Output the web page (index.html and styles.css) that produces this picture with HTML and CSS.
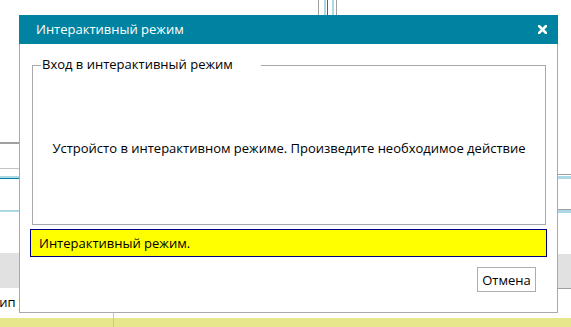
FILE: index.html
```
<!DOCTYPE html>
<html lang="ru">
<head>
<meta charset="utf-8">
<title>Интерактивный режим</title>
<link rel="stylesheet" href="styles.css">
</head>
<body>
<div class="page">
  <div class="col-left">
    <div class="l-line1"></div>
    <div class="l-line2"></div>
    <div class="l-blue-teal"></div>
    <div class="l-blue"></div>
    <div class="l-gray"></div>
    <div class="l-text">Тип устройства</div>
  </div>
  <div class="col-mid">
    <div class="splitter">
      <span class="sp-gray"></span>
      <span class="sp-blue sp-a"></span>
      <span class="sp-teal"></span>
      <span class="sp-blue sp-b"></span>
      <span class="sp-gray sp-c"></span>
    </div>
    <div class="mid-fill"></div>
    <div class="mid-tick"></div>
  </div>
  <div class="col-right">
    <div class="r-line"></div>
    <div class="r-blue"></div>
    <div class="r-line r-line2"></div>
    <div class="r-blue r-blue2"></div>
    <div class="r-gray"></div>
  </div>
  <div class="band"><div class="band-tick"></div></div>
</div>

<div class="dialog">
  <div class="titlebar">
    <span class="title">Интерактивный режим</span>
    <svg class="close" width="9" height="9" viewBox="0 0 9 9" aria-label="Закрыть">
      <path d="M1 1 L8 8 M8 1 L1 8" stroke="#ffffff" stroke-width="2.6" stroke-linecap="square" fill="none"/>
    </svg>
  </div>
  <div class="dbody">
    <div class="group">
      <span class="legend">Вход в интерактивный режим</span>
      <div class="message">Устройсто в интерактивном режиме. Произведите необходимое действие</div>
    </div>
    <div class="status">Интерактивный режим.</div>
    <button class="btn" type="button">Отмена</button>
  </div>
</div>
</body>
</html>
```

FILE: styles.css
```
html, body {
  margin: 0;
  padding: 0;
  background: #ffffff;
}
body {
  width: 571px;
  height: 327px;
  overflow: hidden;
  position: relative;
  font-family: "Open Sans", "Noto Sans", sans-serif;
  font-size: 13px;
  color: #000000;
}
.page {
  display: grid;
  grid-template-columns: 19px 539px 13px;
  grid-template-rows: 318px 9px;
  width: 571px;
  height: 327px;
}
/* left strip */
.col-left {
  display: flex;
  flex-direction: column;
}
.l-line1 { margin-top: 142px; height: 2px; background: #a0a0a0; }
.l-line2 { margin-top: 24px; height: 1px; background: #c4c4c4; }
.l-blue-teal { margin-top: 7px; height: 2px; background: #add8e6; border-bottom: 1px solid #0083a0; }
.l-blue { margin-top: 31px; height: 2px; background: #add8e6; }
.l-gray { margin-top: 41px; height: 35px; background: #e1e1e1; }
.l-text {
  margin-top: 6px;
  white-space: nowrap;
  text-indent: -8px;
  line-height: 17px;
}
/* middle */
.col-mid {
  display: flex;
  flex-direction: column;
}
.splitter {
  height: 15px;
  display: flex;
  padding-left: 299px;
}
.splitter span { display: block; height: 15px; }
.sp-gray { width: 1px; background: #a0a0a0; }
.sp-blue { width: 2px; background: #add8e6; }
.sp-a { margin-left: 5px; }
.sp-teal { width: 1px; background: #0083a0; margin-left: 1px; }
.sp-b { margin-left: 4px; }
.sp-c { margin-left: 2px; }
.mid-fill { flex: 1; }
.mid-tick { height: 5px; margin-left: 94px; border-left: 1px solid #c8c8c8; }
/* right strip */
.col-right {
  display: flex;
  flex-direction: column;
}
.r-line { margin-top: 174px; height: 1px; background: #a0a0a0; }
.r-blue { margin-top: 1px; height: 3px; background: #add8e6; }
.r-line2 { margin-top: 30px; }
.r-blue2 { margin-top: 0; }
.r-gray { margin-top: 41px; height: 34px; background: #e1e1e1; border-bottom: 1px solid #a0a0a0; }
/* bottom band */
.band {
  grid-column: 1 / 4;
  background: #e8e68c;
}
.band-tick { height: 9px; margin-left: 113px; border-left: 1px solid #c8c8a0; }

/* dialog */
.dialog {
  position: absolute;
  left: 19px;
  top: 15px;
  width: 539px;
  height: 298px;
  box-sizing: border-box;
  background: #ffffff;
  border: 1px solid #a9a9a9;
  border-top: 0;
  display: flex;
  flex-direction: column;
}
.titlebar {
  height: 29px;
  margin: 0 -1px;
  background: #0083a0;
  display: flex;
  align-items: center;
  justify-content: space-between;
  padding: 0 11px 0 17px;
}
.title {
  color: #ffffff;
  font-size: 13px;
  line-height: 17px;
}
.close { display: block; }
.dbody {
  padding: 0 10px;
  display: flex;
  flex-direction: column;
}
.group {
  position: relative;
  margin: 21px 1px 0 2px;
  height: 160px;
  box-sizing: border-box;
  border: 1px solid #a9a9a9;
  display: flex;
  align-items: center;
  justify-content: center;
  padding-top: 6px;
}
.legend {
  position: absolute;
  left: 8px;
  top: -10px;
  padding: 0 28px 0 1px;
  background: #ffffff;
  line-height: 17px;
  white-space: nowrap;
}
.message {
  line-height: 17px;
  white-space: nowrap;
}
.status {
  margin-top: 4px;
  height: 28px;
  box-sizing: border-box;
  border: 1px solid #000080;
  background: #ffff00;
  padding-left: 8px;
  display: flex;
  align-items: center;
  line-height: 17px;
}
.btn {
  align-self: flex-end;
  margin: 10px 11px 0 0;
  width: 59px;
  height: 25px;
  box-sizing: border-box;
  border: 1px solid #adadad;
  background: #ffffff;
  font-family: inherit;
  font-size: 13px;
  color: #000000;
  padding: 0;
}
```
